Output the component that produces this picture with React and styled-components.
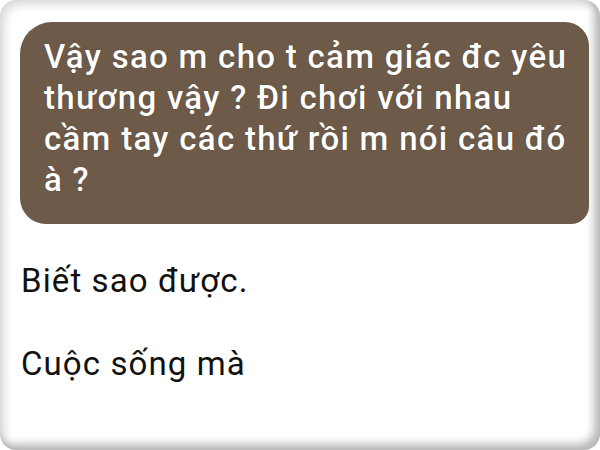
import React from "react";
import styled, { createGlobalStyle } from "styled-components";

const GlobalStyle = createGlobalStyle`
  html, body {
    margin: 0;
    padding: 0;
    background: #ffffff;
  }
  body {
    font-family: Roboto, "Noto Sans", "Liberation Sans", sans-serif;
  }
`;

const Frame = styled.div`
  box-sizing: border-box;
  width: 600px;
  height: 450px;
  border-radius: 16px;
  background: #ffffff;
  box-shadow:
    inset -6px -6px 9px rgba(0, 0, 0, 0.28),
    inset 5px 5px 9px rgba(0, 0, 0, 0.14);
  padding: 22px 11px 0 20px;
  overflow: hidden;
`;

const Bubble = styled.div`
  background: #6e5a48;
  color: #ffffff;
  border-radius: 32px 24px 18px 26px;
  padding: 14px 6px 24px 24px;
  font-size: 33px;
  font-weight: 500;
  line-height: 41px;
  letter-spacing: 1.3px;
  white-space: nowrap;
  text-shadow: 0 0 1px rgba(40, 30, 20, 0.6);
`;

const Message = styled.p`
  margin: 0;
  padding-left: 1px;
  color: #111111;
  font-size: 33px;
  line-height: 41.5px;
  letter-spacing: 1.1px;
  margin-top: ${(p) => p.$top}px;
`;

export default function App() {
  return (
    <>
      <GlobalStyle />
      <Frame>
        <Bubble>
          Vậy sao m cho t cảm giác đc yêu
          <br />
          thương vậy ? Đi chơi với nhau
          <br />
          cầm tay các thứ rồi m nói câu đó
          <br />
          à ?
        </Bubble>
        <Message $top={36}>Biết sao được.</Message>
        <Message $top={41.5}>Cuộc sống mà</Message>
      </Frame>
    </>
  );
}
